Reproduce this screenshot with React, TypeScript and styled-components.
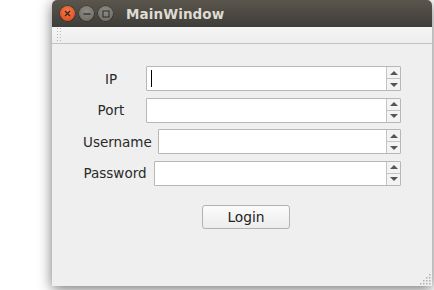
import * as React from "react";
import styled, { createGlobalStyle } from "styled-components";

const GlobalStyles = createGlobalStyle`
  html, body {
    margin: 0;
    padding: 0;
    background: #ffffff;
    font-family: "DejaVu Sans", "Liberation Sans", sans-serif;
  }
  * { box-sizing: border-box; }
`;

const Screen = styled.div`
  width: 434px;
  height: 290px;
  overflow: hidden;
  padding-left: 52px;
  display: flex;
`;

const Window = styled.div`
  width: 380px;
  height: 286px;
  display: flex;
  flex-direction: column;
  border-radius: 5px 5px 0 0;
  box-shadow: 0 3px 14px rgba(0, 0, 0, 0.55);
  position: relative;
  overflow: hidden;
`;

const TitleBar = styled.div`
  height: 27px;
  display: flex;
  align-items: center;
  padding-left: 8px;
  gap: 4px;
  background: linear-gradient(#5a564d, #3e3d38);
`;

const WinButton = styled.div<{ $close?: boolean }>`
  width: 15px;
  height: 15px;
  border-radius: 50%;
  display: flex;
  align-items: center;
  justify-content: center;
  background: ${(p) =>
    p.$close
      ? "radial-gradient(circle at 50% 35%, #f47a4c, #dc4516)"
      : "radial-gradient(circle at 50% 35%, #8f8c85, #6a6761)"};
  box-shadow: 0 0 0 0.5px rgba(0, 0, 0, 0.4);
`;

const Title = styled.span`
  margin-left: 9px;
  color: #dfdbd2;
  font-family: "DejaVu Sans", sans-serif;
  font-weight: bold;
  font-size: 13.5px;
  letter-spacing: 0.1px;
`;

const MenuBar = styled.div`
  height: 17px;
  background: linear-gradient(#f6f6f6, #ededed);
  border-bottom: 1px solid #c3c3c3;
  padding-left: 5px;
  display: flex;
  align-items: center;
`;

const Content = styled.div`
  flex: 1;
  background: #efefef;
  padding: 22px 31px 0 31px;
  display: flex;
  flex-direction: column;
`;

const Form = styled.div`
  display: flex;
  flex-direction: column;
  gap: 6.5px;
`;

const Row = styled.div`
  display: flex;
  align-items: center;
  gap: 7px;
  height: 25px;
`;

const Label = styled.span<{ $w: number }>`
  width: ${(p) => p.$w}px;
  flex: none;
  text-align: center;
  white-space: nowrap;
  font-size: 13.5px;
  color: #2a2a2a;
`;

const Spin = styled.div`
  flex: 1;
  height: 25px;
  display: flex;
  border: 1px solid #b7b7b7;
  border-radius: 1px;
  background: #ffffff;
`;

const Field = styled.div`
  flex: 1;
  display: flex;
  align-items: center;
  padding-left: 4px;
`;

const Caret = styled.div`
  width: 1px;
  height: 17px;
  background: #000000;
`;

const Arrows = styled.div`
  width: 14px;
  border-left: 1px solid #c4c4c4;
  display: flex;
  flex-direction: column;
  background: #f3f3f3;
`;

const ArrowBtn = styled.div<{ $down?: boolean }>`
  flex: 1;
  display: flex;
  align-items: center;
  justify-content: center;
  border-top: ${(p) => (p.$down ? "1px solid #c4c4c4" : "none")};
`;

const Triangle = styled.div<{ $down?: boolean }>`
  width: 0;
  height: 0;
  border-left: 4px solid transparent;
  border-right: 4px solid transparent;
  ${(p) =>
    p.$down ? "border-top: 4px solid #555;" : "border-bottom: 4px solid #555;"}
`;

const LoginButton = styled.button`
  margin: 19.5px 0 0 119px;
  width: 88px;
  height: 24px;
  border: 1px solid #b2b2b2;
  border-radius: 3px;
  background: linear-gradient(#fbfbfb, #ececec);
  font-family: "DejaVu Sans", sans-serif;
  font-size: 13.8px;
  color: #222222;
  padding: 0;
`;

const Grip = styled.svg`
  position: absolute;
  right: 1px;
  bottom: 1px;
`;

const SpinBox = ({ focused }: { focused?: boolean }) => (
  <Spin>
    <Field>{focused && <Caret />}</Field>
    <Arrows>
      <ArrowBtn>
        <Triangle />
      </ArrowBtn>
      <ArrowBtn $down>
        <Triangle $down />
      </ArrowBtn>
    </Arrows>
  </Spin>
);

const rows = [
  { label: "IP", w: 56, focused: true },
  { label: "Port", w: 56 },
  { label: "Username", w: 68 },
  { label: "Password", w: 64 },
];

export default function App() {
  return (
    <Screen>
      <GlobalStyles />
      <Window>
        <TitleBar>
          <WinButton $close>
            <svg width="7" height="7" viewBox="0 0 7 7">
              <path d="M1 1L6 6M6 1L1 6" stroke="#3a2418" strokeWidth="1.3" />
            </svg>
          </WinButton>
          <WinButton>
            <svg width="8" height="8" viewBox="0 0 8 8">
              <path d="M0.5 4H7.5" stroke="#3a3935" strokeWidth="1.3" />
            </svg>
          </WinButton>
          <WinButton>
            <svg width="8" height="8" viewBox="0 0 8 8">
              <rect x="1" y="1" width="6" height="6" fill="none" stroke="#3a3935" strokeWidth="1.2" />
            </svg>
          </WinButton>
          <Title>MainWindow</Title>
        </TitleBar>
        <MenuBar>
          <svg width="5" height="16" viewBox="0 0 5 16">
            {[1, 4, 7, 10, 13].map((y) => (
              <g key={y}>
                <rect x="0" y={y} width="1" height="1" fill="#b5b5b5" />
                <rect x="3" y={y} width="1" height="1" fill="#b5b5b5" />
              </g>
            ))}
          </svg>
        </MenuBar>
        <Content>
          <Form>
            {rows.map((r) => (
              <Row key={r.label}>
                <Label $w={r.w}>{r.label}</Label>
                <SpinBox focused={r.focused} />
              </Row>
            ))}
          </Form>
          <LoginButton>Login</LoginButton>
        </Content>
        <Grip width="13" height="13" viewBox="0 0 13 13">
          {[
            [11, 2],
            [8, 5],
            [11, 5],
            [5, 8],
            [8, 8],
            [11, 8],
            [2, 11],
            [5, 11],
            [8, 11],
            [11, 11],
          ].map(([x, y]) => (
            <rect key={`${x}-${y}`} x={x} y={y} width="1.5" height="1.5" fill="#b0b0b0" />
          ))}
        </Grip>
      </Window>
    </Screen>
  );
}
